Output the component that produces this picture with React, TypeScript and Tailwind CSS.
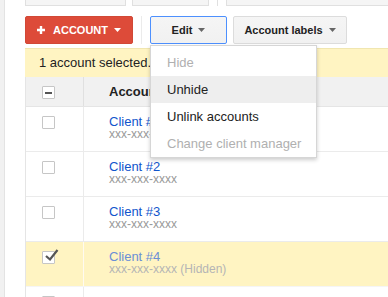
import React from "react";

type Client = { name: string; hidden?: boolean; checked?: boolean };

const clients: Client[] = [
  { name: "Client #1" },
  { name: "Client #2" },
  { name: "Client #3" },
  { name: "Client #4", hidden: true, checked: true },
];

const Caret: React.FC<{ color: string }> = ({ color }) => (
  <svg width="7" height="4" viewBox="0 0 7 4" className="ml-[6px]">
    <path d="M0 0 L7 0 L3.5 4 Z" fill={color} />
  </svg>
);

const Checkbox: React.FC<{ checked?: boolean; minus?: boolean }> = ({ checked, minus }) => (
  <div className="relative w-[13px] h-[13px] border border-[#c6c6c6] bg-white rounded-[1px]">
    {minus && <div className="absolute left-[2px] top-[5px] w-[7px] h-[2px] bg-[#555]" />}
    {checked && (
      <svg width="16" height="14" viewBox="0 0 16 14" className="absolute left-[1px] top-[-4px]">
        <path d="M2 8 L6 11.5 L13.5 2" stroke="#555" strokeWidth="2.2" fill="none" />
      </svg>
    )}
  </div>
);

const menuItems = [
  { label: "Hide", disabled: true },
  { label: "Unhide", active: true },
  { label: "Unlink accounts" },
  { label: "Change client manager", disabled: true },
];

export default function App() {
  return (
    <div
      className="w-[388px] h-[297px] overflow-hidden flex bg-white text-[13px] text-[#222]"
      style={{ fontFamily: '"Liberation Sans", Arial, sans-serif' }}
    >
      <div className="w-[5px] shrink-0 bg-[#f1f1f1] border-r border-[#e3e3e3]" />
      <div className="flex-1 pl-[20px]">
        {/* tail of the panel above */}
        <div className="flex h-[6px] items-start">
          <div className="w-[101px] h-[6px] bg-[#f5f5f5] border-x border-b border-[#e0e0e0]" />
          <div className="ml-[6px] w-[77px] h-[6px] bg-[#f5f5f5] border-x border-b border-[#e0e0e0]" />
          <div className="ml-[8px] w-px h-[6px] bg-[#e0e0e0]" />
          <div className="ml-[8px] flex-1 h-[6px] bg-[#f5f5f5] border-l border-b border-[#e0e0e0]" />
        </div>

        {/* toolbar */}
        <div className="flex items-center mt-[10px] h-[28px]">
          <button className="w-[108px] h-[28px] flex items-center justify-center rounded-[2px] bg-[#dd4b39] border border-[#d14836] text-white font-bold text-[11px]">
            <svg width="8" height="8" viewBox="0 0 8 8" className="mr-[8px]">
              <path d="M2.8 0 H5.2 V2.8 H8 V5.2 H5.2 V8 H2.8 V5.2 H0 V2.8 H2.8 Z" fill="#fff" />
            </svg>
            ACCOUNT
            <Caret color="#fff" />
          </button>
          <div className="ml-[8px] w-px h-[28px] bg-[#ebebeb]" />
          <div className="relative ml-[8px]">
            <button className="w-[77px] h-[28px] flex items-center justify-center rounded-[2px] border border-[#4d90fe] bg-gradient-to-b from-[#f5f5f5] to-[#f1f1f1] text-[#222] font-bold text-[11px]">
              Edit
              <Caret color="#666" />
            </button>
            <div className="absolute z-10 left-0 top-[29px] w-[167px] bg-white border border-[#d6d6d6] shadow-[0_2px_4px_rgba(0,0,0,0.2)] pt-[3px]">
              {menuItems.map((m) => (
                <div
                  key={m.label}
                  className={`h-[27px] flex items-center pl-[16px] text-[13px] ${
                    m.active ? "bg-[#eeeeee]" : ""
                  } ${m.disabled ? "text-[#b0b0b0]" : "text-[#222]"}`}
                >
                  {m.label}
                </div>
              ))}
            </div>
          </div>
          <button className="ml-[6px] w-[114px] h-[28px] flex items-center justify-center rounded-[2px] border border-[#dcdcdc] bg-gradient-to-b from-[#f5f5f5] to-[#f1f1f1] text-[#222] font-bold text-[11px]">
            Account labels
            <Caret color="#666" />
          </button>
        </div>

        {/* selection bar */}
        <div className="mt-[4px] h-[29px] flex items-center pl-[14px] bg-[#fff4c2] border-t border-[#f0e6b0]">
          1 account selected.
        </div>

        {/* table */}
        <div className="border-l border-[#e5e5e5]">
          <div className="h-[30px] flex bg-[#f1f1f1] border-b border-[#e5e5e5]">
            <div className="w-[58px] shrink-0 border-r border-[#e0e0e0] pl-[16px] pt-[9px]">
              <Checkbox minus />
            </div>
            <div className="pl-[25px] flex items-center font-bold">Account</div>
          </div>
          {clients.map((c) => (
            <div
              key={c.name}
              className={`h-[45px] flex border-b ${
                c.checked ? "bg-[#fff4c2] border-[#f5f5f5]" : "border-[#ebebeb]"
              }`}
            >
              <div
                className={`w-[58px] shrink-0 border-r pl-[16px] pt-[9px] ${
                  c.checked ? "border-[#fffaf0]" : "border-[#ebebeb]"
                }`}
              >
                <Checkbox checked={c.checked} />
              </div>
              <div className="pl-[25px] pt-[9px] flex flex-col">
                <span className={`leading-[12px] ${c.hidden ? "text-[#6b8fd6]" : "text-[#1155cc]"}`}>
                  {c.name}
                </span>
                <span className={`text-[12px] leading-[12px] ${c.hidden ? "text-[#b5b5b5]" : "text-[#999]"}`}>
                  xxx-xxx-xxxx{c.hidden ? " (Hidden)" : ""}
                </span>
              </div>
            </div>
          ))}
          {/* next row, only its checkbox edge is in view */}
          <div className="h-[45px] flex">
            <div className="w-[58px] shrink-0 border-r border-[#ebebeb] pl-[16px] pt-[9px]">
              <Checkbox />
            </div>
          </div>
        </div>
      </div>
    </div>
  );
}
